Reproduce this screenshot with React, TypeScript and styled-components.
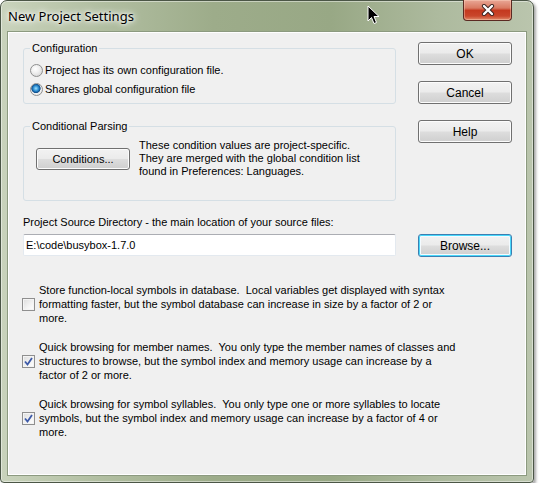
import React from 'react'
import styled, { createGlobalStyle } from 'styled-components'

const GlobalStyle = createGlobalStyle`
    html, body {
        margin: 0;
        padding: 0;
        background: #ffffff;
    }
    body {
        font-family: "Liberation Sans", Arial, sans-serif;
        font-size: 11px;
        color: #000;
    }
`

const options = [
    {
        checked: false,
        lines: [
            'Store function-local symbols in database.  Local variables get displayed with syntax',
            'formatting faster, but the symbol database can increase in size by a factor of 2 or',
            'more.',
        ],
    },
    {
        checked: true,
        lines: [
            'Quick browsing for member names.  You only type the member names of classes and',
            'structures to browse, but the symbol index and memory usage can increase by a',
            'factor of 2 or more.',
        ],
    },
    {
        checked: true,
        lines: [
            'Quick browsing for symbol syllables.  You only type one or more syllables to locate',
            'symbols, but the symbol index and memory usage can increase by a factor of 4 or',
            'more.',
        ],
    },
]

const CloseGlyph = () => (
    <svg width="14" height="12" viewBox="0 0 14 12">
        <path d="M3 2 L11 10 M11 2 L3 10" stroke="#3a2320" strokeWidth="4.2" strokeLinecap="round" />
        <path d="M3 2 L11 10 M11 2 L3 10" stroke="#ffffff" strokeWidth="2.4" strokeLinecap="round" />
    </svg>
)

const Cursor = () => (
    <svg width="13" height="20" viewBox="0 0 13 20">
        <path
            d="M1 1 L1 16 L4.5 12.5 L7 18.5 L9.5 17.5 L7 11.5 L12 11.5 Z"
            fill="#000"
            stroke="#fff"
            strokeWidth="1"
            strokeLinejoin="round"
        />
    </svg>
)

const CheckMark = () => (
    <svg width="9" height="9" viewBox="0 0 9 9">
        <path d="M1 4.5 L3.5 7.5 L8 1" stroke="#3d5aa8" strokeWidth="1.8" fill="none" />
    </svg>
)

export default function App(): JSX.Element {
    return (
        <>
            <GlobalStyle />
            <Window>
                <TitleBar>
                    <Title>New Project Settings</Title>
                    <CloseButton>
                        <CloseGlyph />
                    </CloseButton>
                </TitleBar>
                <PointerSpot>
                    <Cursor />
                </PointerSpot>
                <Client>
                    <TopRow>
                        <LeftCol>
                            <Group>
                                <Legend>Configuration</Legend>
                                <RadioList>
                                    <Choice>
                                        <Radio />
                                        Project has its own configuration file.
                                    </Choice>
                                    <Choice>
                                        <Radio selected />
                                        Shares global configuration file
                                    </Choice>
                                </RadioList>
                            </Group>
                            <Group spaced>
                                <Legend>Conditional Parsing</Legend>
                                <ParsingRow>
                                    <InnerButton>Conditions...</InnerButton>
                                    <Description>
                                        These condition values are project-specific.
                                        <br />
                                        They are merged with the global condition list
                                        <br />
                                        found in Preferences: Languages.
                                    </Description>
                                </ParsingRow>
                            </Group>
                        </LeftCol>
                        <ButtonCol>
                            <DialogButton>OK</DialogButton>
                            <DialogButton>Cancel</DialogButton>
                            <DialogButton>Help</DialogButton>
                        </ButtonCol>
                    </TopRow>
                    <FieldLabel>Project Source Directory - the main location of your source files:</FieldLabel>
                    <SourceRow>
                        <PathInput defaultValue="E:\code\busybox-1.7.0" />
                        <DialogButton focused>Browse...</DialogButton>
                    </SourceRow>
                    <CheckList>
                        {options.map((opt, i) => (
                            <CheckRow key={i}>
                                <Box>{opt.checked && <CheckMark />}</Box>
                                <CheckText>
                                    {opt.lines.map((l, j) => (
                                        <Line key={j}>{l}</Line>
                                    ))}
                                </CheckText>
                            </CheckRow>
                        ))}
                    </CheckList>
                </Client>
            </Window>
        </>
    )
}

const Window = styled.div`
    position: relative;
    box-sizing: border-box;
    width: 534px;
    height: 483px;
    display: flex;
    flex-direction: column;
    padding: 0 6px 6px;
    border: 1px solid #4b5646;
    border-radius: 7px 7px 4px 4px;
    background: linear-gradient(
        to right,
        #c9d3bc 0%,
        #b2bfa2 18%,
        #9dac8a 40%,
        #98a885 62%,
        #adba9e 82%,
        #bac5ad 100%
    );
    box-shadow: 2px 2px 3px rgba(0, 0, 0, 0.35), inset 0 0 0 1px rgba(255, 255, 255, 0.45);
`

const TitleBar = styled.div`
    height: 30px;
    display: flex;
    align-items: flex-start;
`

const Title = styled.div`
    margin: 6px 0 0 1px;
    font-family: "Noto Sans", "Open Sans", sans-serif;
    font-size: 13px;
    line-height: 18px;
    color: #000;
    text-shadow: 0 0 6px #fff, 0 0 10px #fff, 0 0 3px #fff;
`

const CloseButton = styled.div`
    margin: -1px 15px 0 auto;
    box-sizing: border-box;
    width: 49px;
    height: 21px;
    display: flex;
    align-items: center;
    justify-content: center;
    border: 1px solid #5b2a22;
    border-top: none;
    border-radius: 0 0 4px 4px;
    background: linear-gradient(
        to bottom,
        #e9a796 0%,
        #d97a62 40%,
        #c4391f 52%,
        #c9462b 80%,
        #e08a6a 100%
    );
    box-shadow: inset 0 0 0 1px rgba(255, 220, 200, 0.4);
`

const PointerSpot = styled.div`
    position: absolute;
    left: 366px;
    top: 4px;
    line-height: 0;
`

const Client = styled.div`
    flex: 1;
    box-sizing: border-box;
    padding: 10px 14px 0 15px;
    background: #f0f0f0;
    border: 1px solid #8c9a80;
    box-shadow: inset 0 0 0 1px #ffffff;
`

const TopRow = styled.div`
    display: flex;
    gap: 22px;
`

const LeftCol = styled.div`
    width: 373px;
    display: flex;
    flex-direction: column;
`

const Group = styled.fieldset<{ spaced?: boolean }>`
    margin: ${(p) => (p.spaced ? '16px 0 0' : '0')};
    padding: ${(p) => (p.spaced ? '6px 6px 22px' : '8px 6px 7px')};
    border: 1px solid #d5dfe5;
    border-radius: 3px;
    min-width: 0;
`

const Legend = styled.legend`
    padding: 0 2px;
    line-height: 13px;
`

const RadioList = styled.div`
    display: flex;
    flex-direction: column;
    gap: 5px;
`

const Choice = styled.div`
    display: flex;
    align-items: center;
    gap: 2px;
    height: 14px;
`

const Radio = styled.span<{ selected?: boolean }>`
    box-sizing: border-box;
    width: 13px;
    height: 13px;
    border-radius: 50%;
    border: 1px solid #8e8f8f;
    background: ${(p) =>
        p.selected
            ? 'radial-gradient(circle at 45% 40%, #9fe2ff 0%, #2a8bd0 30%, #0f4d8a 48%, #f2f2f2 56%, #dcdcdc 100%)'
            : 'radial-gradient(circle at 40% 35%, #ffffff 0%, #f0f0f0 40%, #cdcdcd 100%)'};
`

const ParsingRow = styled.div`
    display: flex;
    align-items: flex-start;
    gap: 9px;
`

const Description = styled.div`
    line-height: 13px;
`

const buttonLook = `
    box-sizing: border-box;
    display: flex;
    align-items: center;
    justify-content: center;
    width: 94px;
    font-family: "Liberation Sans", Arial, sans-serif;
    font-size: 11px;
    color: #000;
    border-radius: 3px;
    background: linear-gradient(to bottom, #f2f2f2 0%, #ebebeb 48%, #dddddd 52%, #cfcfcf 100%);
    box-shadow: inset 0 0 0 1px #fcfcfc;
    padding: 0;
`

const InnerButton = styled.button`
    ${buttonLook}
    margin: 9px 0 0 6px;
    height: 22px;
    flex-shrink: 0;
    border: 1px solid #707070;
`

const ButtonCol = styled.div`
    display: flex;
    flex-direction: column;
    gap: 16px;
`

const DialogButton = styled.button<{ focused?: boolean }>`
    ${buttonLook}
    height: 23px;
    font-size: 12px;
    border: 1px solid ${(p) => (p.focused ? '#3c7fb1' : '#707070')};
    ${(p) => p.focused && 'box-shadow: inset 0 0 0 1px #48d8fb, inset 0 0 0 2px #f4fbff;'}
`

const FieldLabel = styled.div`
    margin-top: 14px;
    line-height: 14px;
`

const SourceRow = styled.div`
    margin-top: 5px;
    display: flex;
    gap: 22px;
`

const PathInput = styled.input`
    box-sizing: border-box;
    width: 373px;
    height: 22px;
    margin: 0;
    padding: 0 2px;
    font-family: "Liberation Sans", Arial, sans-serif;
    font-size: 11px;
    color: #000;
    background: #fff;
    border: 1px solid #e3e9ef;
    border-top-color: #abadb3;
    border-radius: 2px;
    outline: none;
`

const CheckList = styled.div`
    margin-top: 26px;
    display: flex;
    flex-direction: column;
    gap: 15px;
`

const CheckRow = styled.div`
    display: flex;
    align-items: center;
    gap: 4px;
`

const Box = styled.span`
    box-sizing: border-box;
    margin-left: -1px;
    width: 13px;
    height: 13px;
    flex-shrink: 0;
    display: flex;
    align-items: center;
    justify-content: center;
    border: 1px solid #8f8f8f;
    background: linear-gradient(135deg, #dcdcdc 0%, #f4f4f4 60%, #ffffff 100%);
    box-shadow: inset 0 0 0 1px #f4f4f4;
`

const CheckText = styled.div`
    line-height: 14px;
`

const Line = styled.div`
    white-space: pre;
`
